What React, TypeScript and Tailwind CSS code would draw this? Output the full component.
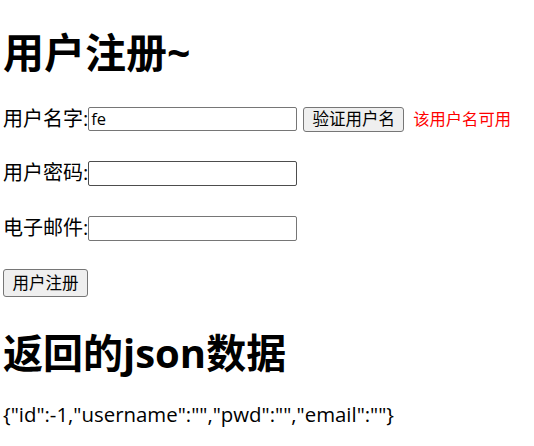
export default function App() {
  const font = { fontFamily: '"Open Sans", "Noto Sans CJK SC", sans-serif' }

  return (
    <div className="min-h-screen w-full bg-white pl-[3px] pt-[32px] text-black" style={font}>
      <h1 className="h-[41px] text-[41px] font-bold leading-[41px]">用户注册~</h1>

      {/* username */}
      <div className="mt-[33px] flex h-[26px] items-center text-[20px]">
        <span>用户名字:</span>
        <input
          defaultValue="fe"
          className="h-[24px] w-[209px] rounded-[2px] border border-[#767676] px-[2px] text-[16.5px] outline-none"
        />
        <button className="ml-[6px] h-[25px] w-[101px] rounded-[3px] border border-[#767676] bg-[#efefef] text-[16.5px] leading-none">
          验证用户名
        </button>
        <span className="ml-[9px] text-[16.3px] text-[#ff0000]">该用户名可用</span>
      </div>

      {/* password */}
      <div className="mt-[28px] flex h-[26px] items-center text-[20px]">
        <span>用户密码:</span>
        <input
          type="password"
          className="h-[25px] w-[209px] rounded-[2px] border border-[#4d4d4d] px-[2px] outline-none"
        />
      </div>

      {/* email */}
      <div className="mt-[29px] flex h-[26px] items-center text-[20px]">
        <span>电子邮件:</span>
        <input className="h-[25px] w-[209px] rounded-[2px] border border-[#767676] px-[2px] outline-none" />
      </div>

      <div className="mt-[28px]">
        <button className="h-[28px] w-[85px] rounded-[3px] border border-[#767676] bg-[#efefef] text-[16.5px] leading-none">
          用户注册
        </button>
      </div>

      <h2 className="mt-[36px] h-[40px] text-[40px] font-bold leading-[40px]">返回的json数据</h2>

      <p className="mt-[28px] h-[26px] text-[20.4px] leading-[26px]">
        {'{"id":-1,"username":"","pwd":"","email":""}'}
      </p>
    </div>
  )
}
